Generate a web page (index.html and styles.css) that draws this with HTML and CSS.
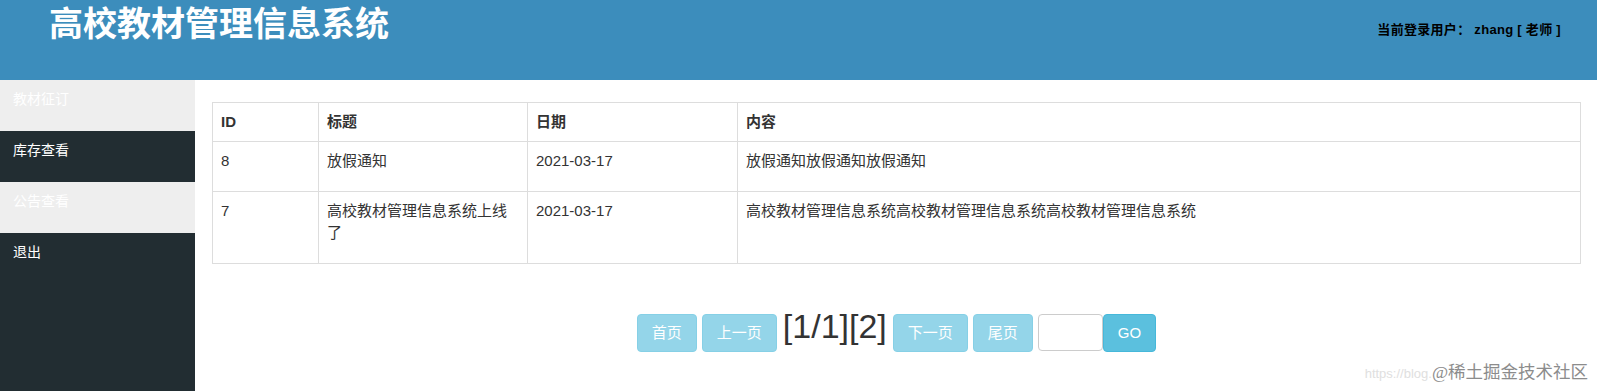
FILE: index.html
```html
<!DOCTYPE html>
<html>
<head>
  <meta charset="utf-8">
  <title>高校教材管理信息系统</title>
  <link rel="stylesheet" href="styles.css">
</head>
<body>
  <div class="header">
    <h1 class="title">高校教材管理信息系统</h1>
    <div class="user">当前登录用户： zhang [ 老师 ]</div>
  </div>

  <div class="wrap">
    <ul class="menu">
      <li class="light"><a href="#">教材征订</a></li>
      <li><a href="#">库存查看</a></li>
      <li class="light"><a href="#">公告查看</a></li>
      <li><a href="#">退出</a></li>
    </ul>

    <div class="main">
      <table class="table">
        <colgroup>
          <col class="c-id">
          <col class="c-title">
          <col class="c-date">
          <col>
        </colgroup>
        <tr>
          <th>ID</th>
          <th>标题</th>
          <th>日期</th>
          <th>内容</th>
        </tr>
        <tr>
          <td>8</td>
          <td>放假通知</td>
          <td>2021-03-17</td>
          <td>放假通知放假通知放假通知</td>
        </tr>
        <tr>
          <td>7</td>
          <td>高校教材管理信息系统上线了</td>
          <td>2021-03-17</td>
          <td>高校教材管理信息系统高校教材管理信息系统高校教材管理信息系统</td>
        </tr>
      </table>

      <div class="pager">
        <button class="btn disabled">首页</button>
        <button class="btn disabled">上一页</button>
        <span class="pages">[1/1][2]</span>
        <button class="btn disabled">下一页</button>
        <button class="btn disabled">尾页</button>
        <input class="page-input" type="text">
        <button class="btn go">GO</button>
      </div>
    </div>
  </div>

  <div class="watermark"><span class="wm-url">https://blog.</span><span class="wm-name">@稀土掘金技术社区</span></div>
</body>
</html>
```

FILE: styles.css
```css
html, body {
  margin: 0;
  padding: 0;
}

body {
  font-family: "Liberation Sans", "Noto Sans CJK SC", sans-serif;
  font-size: 15px;
  line-height: 22px;
  color: #333;
  background: #fff;
  min-height: 100vh;
  position: relative;
}

.header {
  height: 80px;
  background: #3c8dbc;
  display: flex;
  justify-content: space-between;
  align-items: flex-start;
}

.title {
  margin: 0;
  padding-left: 49px;
  font-family: "Noto Sans CJK SC", sans-serif;
  font-size: 34px;
  line-height: 44px;
  font-weight: bold;
  color: #fff;
}

.user {
  padding: 20px 36px 0 0;
  font-family: "Liberation Sans", "Noto Sans CJK SC", sans-serif;
  font-size: 13px;
  line-height: 20px;
  font-weight: bold;
  letter-spacing: 0.3px;
  color: #000;
}

.wrap {
  display: flex;
  min-height: calc(100vh - 80px);
}

.menu {
  width: 195px;
  flex: none;
  margin: 0;
  padding: 0;
  list-style: none;
  background: #222d32;
}

.menu li {
  height: 51px;
  box-sizing: border-box;
  padding: 8px 13px 0;
}

.menu li.light {
  background: #eeeeee;
}

.menu a {
  color: #fff;
  text-decoration: none;
  font-size: 14px;
  line-height: 20px;
}

.main {
  flex: 1;
  padding: 22px 16px 0 17px;
}

.table {
  width: 100%;
  border-collapse: collapse;
  table-layout: fixed;
}

.c-id {
  width: 106px;
}

.c-title {
  width: 209px;
}

.c-date {
  width: 210px;
}

.table th, .table td {
  border: 1px solid #ddd;
  text-align: left;
  vertical-align: top;
}

.table th {
  padding: 8px;
  font-weight: bold;
}

.table td {
  padding: 8px 8px 19px;
}

.pager {
  margin-top: 50px;
  display: flex;
  justify-content: center;
  align-items: baseline;
  gap: 5px;
}

.btn {
  font-family: "Liberation Sans", "Noto Sans CJK SC", sans-serif;
  font-size: 15px;
  line-height: 22px;
  padding: 7px 14px;
  border: 1px solid #46b8da;
  border-radius: 4px;
  background: #5bc0de;
  color: #fff;
}

.btn.disabled {
  opacity: 0.65;
}

.pages {
  font-size: 34px;
  color: #333;
  margin: 0 1px;
}

.page-input {
  width: 65px;
  height: 37px;
  box-sizing: border-box;
  border: 1px solid #ccc;
  border-radius: 4px;
  padding: 6px 10px;
  font-size: 15px;
}

.go {
  margin-left: -5px;
}

.watermark {
  position: absolute;
  right: 9px;
  bottom: 6px;
  line-height: 22px;
}

.wm-url {
  font-family: "Liberation Sans", sans-serif;
  font-size: 13px;
  color: #e0e0e0;
}

.wm-name {
  font-family: "Liberation Serif", "Noto Sans CJK SC", serif;
  font-size: 17.5px;
  color: #8c8c8c;
  text-shadow: 0 0 2px #fff;
}
```
